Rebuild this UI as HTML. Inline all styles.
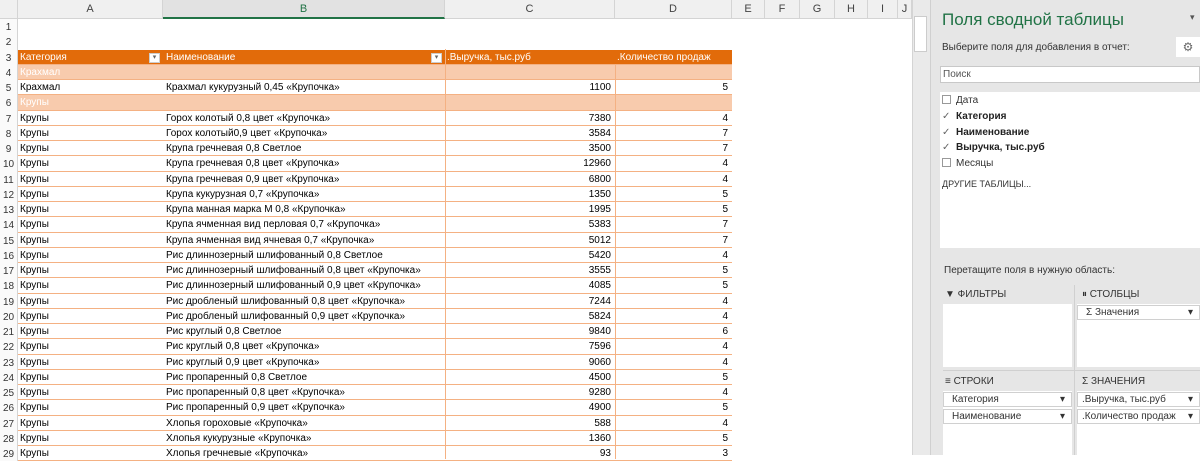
<!DOCTYPE html><html><head><meta charset="utf-8"><style>
*{margin:0;padding:0;box-sizing:border-box}
body{width:1200px;height:455px;overflow:hidden;font-family:"Liberation Sans",sans-serif;font-size:10px;background:#fff;position:relative;color:#000}
.a{position:absolute}
.ch{position:absolute;top:0;height:19px;background:#f0f0f0;border-right:1px solid #d4d4d4;border-bottom:1px solid #d4d4d4;text-align:center;line-height:19px;color:#444;font-size:11px}
.rh{position:absolute;left:0;width:18px;height:15.25px;background:#fafafa;border-right:1px solid #d4d4d4;font-size:10px;line-height:17px;text-align:center;color:#333}
.r{position:absolute;left:18px;width:714px;height:15.25px;border-bottom:1px solid #f4b183;line-height:16px;font-size:10px}
.r span{position:absolute;top:0}
.c1{left:2px}.c2{left:148px}.c3{left:427px;width:170px;text-align:right;padding-right:4px}.c4{left:597px;width:117px;text-align:right;padding-right:4px}
.p{font-size:10px;color:#333}
.box{position:absolute;background:#fff}
.fld{position:absolute;background:#fff;border:1px solid #d0d0d0;height:15px;font-size:10px;line-height:13px;padding-left:8px;color:#333}
.fld:after{content:"▾";position:absolute;right:6px;top:0;font-size:10px}
</style></head><body>
<div class="ch" style="left:0;width:18px"></div>
<div class="ch" style="left:18px;width:145px">A</div>
<div class="ch" style="left:163px;width:282px;background:#e2e2e2;border-bottom:2px solid #217346;color:#217346">B</div>
<div class="ch" style="left:445px;width:170px">C</div>
<div class="ch" style="left:615px;width:117px">D</div>
<div class="ch" style="left:732px;width:33px">E</div>
<div class="ch" style="left:765px;width:35px">F</div>
<div class="ch" style="left:800px;width:35px">G</div>
<div class="ch" style="left:835px;width:33px">H</div>
<div class="ch" style="left:868px;width:30px">I</div>
<div class="ch" style="left:898px;width:14px">J</div>
<div class="a" style="left:912px;top:0;width:18px;height:455px;background:#eaeaea;border-left:1px solid #d4d4d4"></div>
<div class="a" style="left:914px;top:16px;width:13px;height:36px;background:#fff;border:1px solid #ccc"></div>
<div id="rows"></div>
<script>
var d=[["Категория","Наименование",".Выручка, тыс.руб",".Количество продаж","h"],["Крахмал","","","","g"],["Крахмал","Крахмал кукурузный 0,45 «Крупочка»","1100","5"],["Крупы","","","","g"],
["Крупы","Горох колотый 0,8 цвет «Крупочка»","7380","4"],["Крупы","Горох колотый0,9 цвет «Крупочка»","3584","7"],["Крупы","Крупа гречневая 0,8 Светлое","3500","7"],["Крупы","Крупа гречневая 0,8 цвет «Крупочка»","12960","4"],["Крупы","Крупа гречневая 0,9 цвет «Крупочка»","6800","4"],["Крупы","Крупа кукурузная 0,7 «Крупочка»","1350","5"],["Крупы","Крупа манная марка М 0,8 «Крупочка»","1995","5"],["Крупы","Крупа ячменная вид перловая 0,7 «Крупочка»","5383","7"],["Крупы","Крупа ячменная вид ячневая 0,7 «Крупочка»","5012","7"],["Крупы","Рис длиннозерный шлифованный 0,8 Светлое","5420","4"],["Крупы","Рис длиннозерный шлифованный 0,8 цвет «Крупочка»","3555","5"],["Крупы","Рис длиннозерный шлифованный 0,9 цвет «Крупочка»","4085","5"],["Крупы","Рис дробленый шлифованный 0,8 цвет «Крупочка»","7244","4"],["Крупы","Рис дробленый шлифованный 0,9 цвет «Крупочка»","5824","4"],["Крупы","Рис круглый 0,8 Светлое","9840","6"],["Крупы","Рис круглый 0,8 цвет «Крупочка»","7596","4"],["Крупы","Рис круглый 0,9 цвет «Крупочка»","9060","4"],["Крупы","Рис пропаренный 0,8 Светлое","4500","5"],["Крупы","Рис пропаренный 0,8 цвет «Крупочка»","9280","4"],["Крупы","Рис пропаренный 0,9 цвет «Крупочка»","4900","5"],["Крупы","Хлопья  гороховые «Крупочка»","588","4"],["Крупы","Хлопья  кукурузные «Крупочка»","1360","5"],["Крупы","Хлопья гречневые «Крупочка»","93","3"]];
var P=15.25,h="";for(var n=1;n<=29;n++){var t=19+(n-1)*P;h+='<div class="rh" style="top:'+t+'px">'+n+'</div>';}
for(var i=0;i<d.length;i++){var t=19+(i+2)*P,r=d[i],bg="#fff",col="#000";
if(r[4]=="h"){bg="#e26b0a";col="#fff"}else if(r[4]=="g"){bg="#f8cbad";col="#fff"}
h+='<div class="r" style="top:'+t+'px;background:'+bg+';color:'+col+'"><span class="c1">'+r[0]+'</span><span class="c2">'+r[1]+'</span>';
if(r[4]=="h"){h+='<span style="left:429px">'+r[2]+'</span><span style="left:599px">'+r[3]+'</span><span style="left:131px;top:3px;width:11px;height:10px;background:#fff;border:1px solid #ccc;color:#666;font-size:7px;line-height:8px;text-align:center">▾</span><span style="left:413px;top:3px;width:11px;height:10px;background:#fff;border:1px solid #ccc;color:#666;font-size:7px;line-height:8px;text-align:center">▾</span>';}
else h+='<span class="c3">'+r[2]+'</span><span class="c4">'+r[3]+'</span>';
h+='</div>';}
h+='<div class="a" style="left:445px;top:49px;width:1px;height:410px;background:#f4b183"></div><div class="a" style="left:615px;top:64px;width:1px;height:395px;background:#f4b183"></div>';
document.getElementById("rows").innerHTML=h;
</script>
<div class="a" style="left:930px;top:0;width:270px;height:455px;background:#e6e6e6;border-left:1px solid #d0d0d0"></div>
<div class="a" style="left:942px;top:10px;font-size:17px;color:#217346">Поля сводной таблицы</div>
<div class="a" style="left:1190px;top:12px;font-size:9px;color:#555">▾</div>
<div class="a p" style="left:942px;top:42px">Выберите поля для добавления в отчет:</div>
<div class="a" style="left:1176px;top:37px;width:24px;height:20px;background:#fff;text-align:center;line-height:20px;color:#666;font-size:12px">⚙</div>
<div class="box" style="left:940px;top:66px;width:260px;height:17px;border:1px solid #c8c8c8;font-size:10px;color:#555;line-height:15px;padding-left:2px">Поиск</div>
<div class="box" style="left:940px;top:92px;width:260px;height:156px"></div>
<div class="a p" style="left:942px;top:93px;line-height:15.8px">
<div><span style="display:inline-block;width:9px;height:9px;border:1px solid #999;margin-right:5px;vertical-align:-1px"></span>Дата</div>
<div style="font-weight:bold;color:#222"><span style="display:inline-block;width:9px;font-weight:normal;margin-right:5px;color:#666">✓</span>Категория</div>
<div style="font-weight:bold;color:#222"><span style="display:inline-block;width:9px;font-weight:normal;margin-right:5px;color:#666">✓</span>Наименование</div>
<div style="font-weight:bold;color:#222"><span style="display:inline-block;width:9px;font-weight:normal;margin-right:5px;color:#666">✓</span>Выручка, тыс.руб</div>
<div><span style="display:inline-block;width:9px;height:9px;border:1px solid #999;margin-right:5px;vertical-align:-1px"></span>Месяцы</div>
<div style="margin-top:5px;font-size:9px">ДРУГИЕ ТАБЛИЦЫ...</div></div>
<div class="a p" style="left:944px;top:265px">Перетащите поля в нужную область:</div>
<div class="a p" style="left:945px;top:289px">▼ ФИЛЬТРЫ</div>
<div class="a p" style="left:1082px;top:289px">⏸ СТОЛБЦЫ</div>
<div class="box" style="left:943px;top:304px;width:129px;height:63px"></div>
<div class="box" style="left:1077px;top:304px;width:123px;height:63px"></div>
<div class="fld" style="left:1077px;top:305px;width:123px">Σ Значения</div>
<div class="a" style="left:1074px;top:285px;width:1px;height:170px;background:#d0d0d0"></div>
<div class="a" style="left:943px;top:370px;width:257px;height:1px;background:#d0d0d0"></div>
<div class="a p" style="left:945px;top:376px">≡ СТРОКИ</div>
<div class="a p" style="left:1082px;top:376px">Σ ЗНАЧЕНИЯ</div>
<div class="box" style="left:943px;top:391px;width:129px;height:64px"></div>
<div class="box" style="left:1077px;top:391px;width:123px;height:64px"></div>
<div class="fld" style="left:943px;top:392px;width:129px">Категория</div>
<div class="fld" style="left:943px;top:409px;width:129px">Наименование</div>
<div class="fld" style="left:1077px;top:392px;width:123px;padding-left:4px">.Выручка, тыс.руб</div>
<div class="fld" style="left:1077px;top:409px;width:123px;padding-left:4px">.Количество продаж</div>
</body></html>
